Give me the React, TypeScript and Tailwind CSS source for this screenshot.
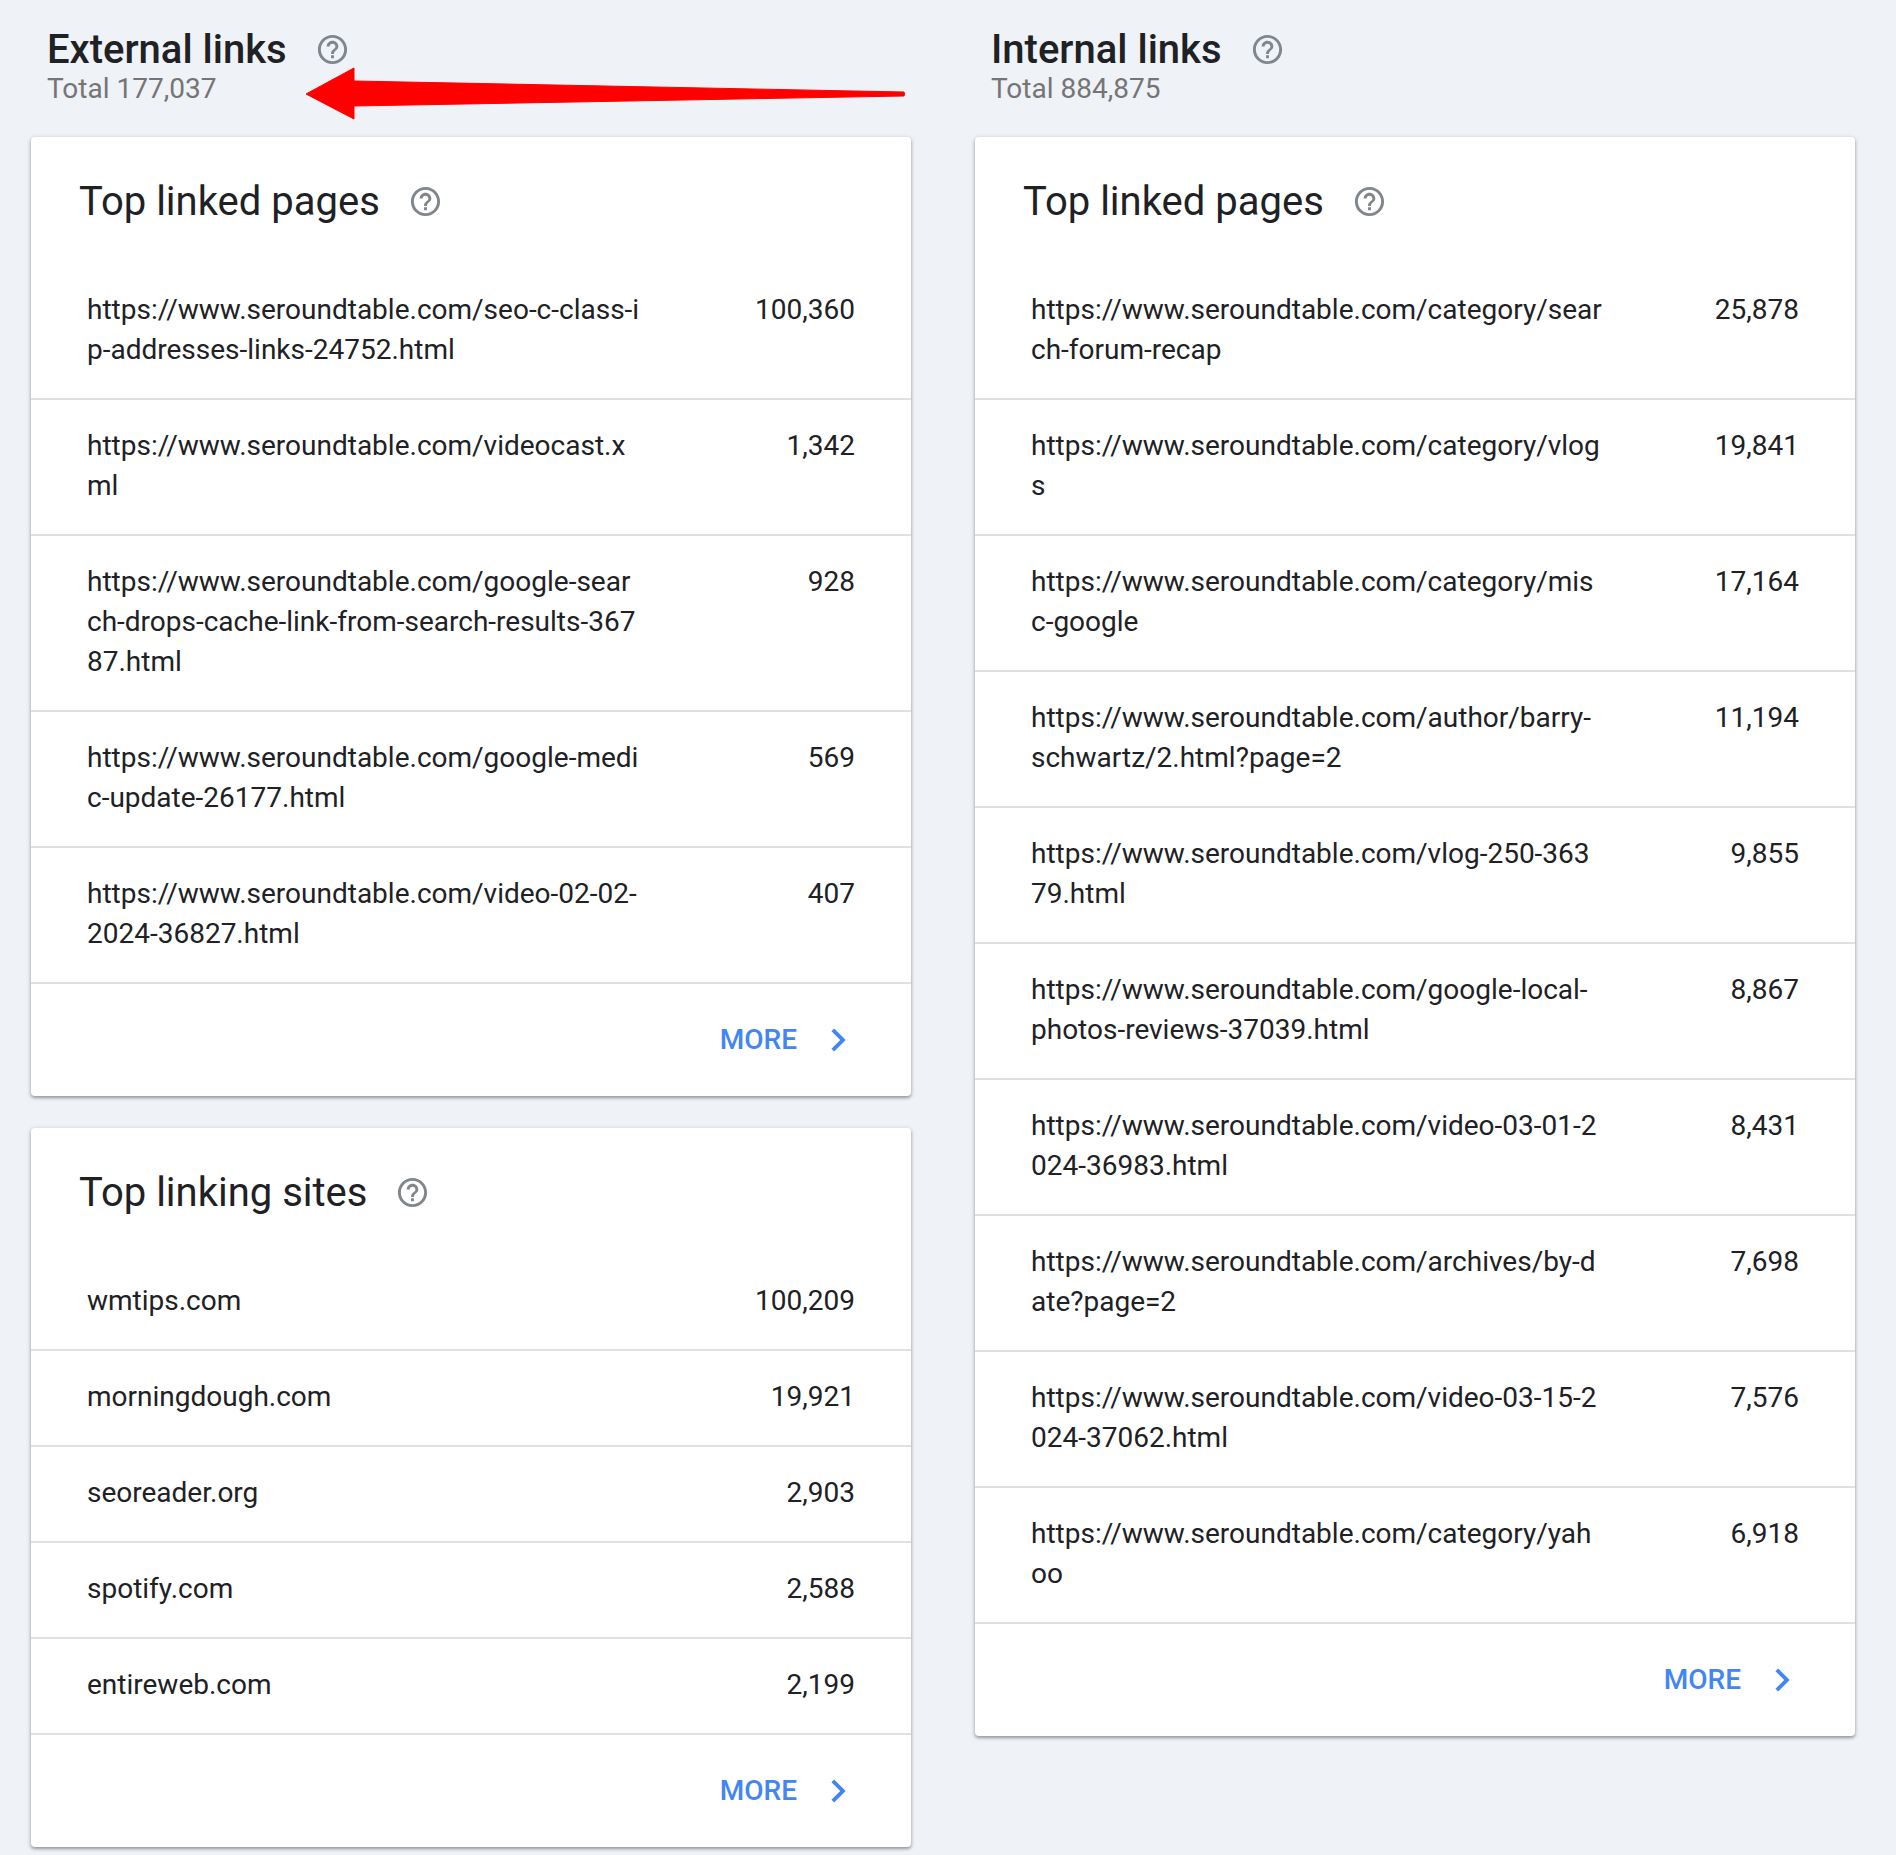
const font = { fontFamily: "Roboto, sans-serif" };

function Help() {
  return (
    <svg viewBox="0 0 24 24" className="w-[35px] h-[35px] ml-[28px] shrink-0 fill-[#80868b]">
      <path d="M11 18h2v-2h-2v2zm1-16C6.48 2 2 6.48 2 12s4.48 10 10 10 10-4.48 10-10S17.52 2 12 2zm0 18c-4.41 0-8-3.59-8-8s3.59-8 8-8 8 3.59 8 8-3.59 8-8 8zm0-14c-2.21 0-4 1.79-4 4h2c0-1.1.9-2 2-2s2 .9 2 2c0 2-3 1.75-3 5h2c0-2.25 3-2.5 3-5 0-2.21-1.79-4-4-4z" />
    </svg>
  );
}

function Card({ title, rows }: { title: string; rows: [string, string][] }) {
  return (
    <div className="bg-white rounded-[4px] shadow-[0_2px_3px_rgba(60,64,67,0.4),0_1px_4px_1px_rgba(60,64,67,0.15)]">
      <div className="h-[127px] pl-[48px] pt-[46px] flex items-start">
        <div className="flex items-center h-[36px]">
          <span className="text-[40px] leading-[37px] text-[#202124]">{title}</span>
          <Help />
        </div>
      </div>
      {rows.map(([url, n]) => (
        <div key={url} className="flex justify-between pl-[56px] pr-[56px] pt-[26px] pb-[28px] border-b-2 border-[#e0e0e0] text-[28px] leading-[40px] text-[#202124]">
          <div className="w-[590px] whitespace-pre-line">{url}</div>
          <div>{n}</div>
        </div>
      ))}
      <div className="h-[112px] flex items-center justify-end pr-[50px]">
        <span className="text-[28px] font-medium text-[#4285f4]">MORE</span>
        <svg viewBox="0 0 24 24" className="w-[46px] h-[46px] ml-[18px] fill-[#4285f4]">
          <path d="M10 6L8.59 7.41 13.17 12l-4.58 4.59L10 18l6-6z" />
        </svg>
      </div>
    </div>
  );
}

function Head({ title, total }: { title: string; total: string }) {
  return (
    <div className="h-[137px] pl-[16px] pt-[27px]">
      <div className="flex items-center h-[44px]">
        <span className="text-[40px] leading-[44px] pt-[2px] font-medium text-[#202124]">{title}</span>
        <Help />
      </div>
      <div className="mt-[1px] text-[28px] leading-[34px] text-[#757575]">{total}</div>
    </div>
  );
}

const topExt: [string, string][] = [
  ["https://www.seroundtable.com/seo-c-class-i\np-addresses-links-24752.html", "100,360"],
  ["https://www.seroundtable.com/videocast.x\nml", "1,342"],
  ["https://www.seroundtable.com/google-sear\nch-drops-cache-link-from-search-results-367\n87.html", "928"],
  ["https://www.seroundtable.com/google-medi\nc-update-26177.html", "569"],
  ["https://www.seroundtable.com/video-02-02-\n2024-36827.html", "407"],
];
const sites: [string, string][] = [
  ["wmtips.com", "100,209"],
  ["morningdough.com", "19,921"],
  ["seoreader.org", "2,903"],
  ["spotify.com", "2,588"],
  ["entireweb.com", "2,199"],
];
const topInt: [string, string][] = [
  ["https://www.seroundtable.com/category/sear\nch-forum-recap", "25,878"],
  ["https://www.seroundtable.com/category/vlog\ns", "19,841"],
  ["https://www.seroundtable.com/category/mis\nc-google", "17,164"],
  ["https://www.seroundtable.com/author/barry-\nschwartz/2.html?page=2", "11,194"],
  ["https://www.seroundtable.com/vlog-250-363\n79.html", "9,855"],
  ["https://www.seroundtable.com/google-local-\nphotos-reviews-37039.html", "8,867"],
  ["https://www.seroundtable.com/video-03-01-2\n024-36983.html", "8,431"],
  ["https://www.seroundtable.com/archives/by-d\nate?page=2", "7,698"],
  ["https://www.seroundtable.com/video-03-15-2\n024-37062.html", "7,576"],
  ["https://www.seroundtable.com/category/yah\noo", "6,918"],
];

export default function App() {
  return (
    <div style={font} className="relative h-[1855px] bg-[#eff2f7] pl-[31px] overflow-hidden">
      <div className="grid grid-cols-[880px_880px] gap-x-[64px] items-start">
        <div>
          <Head title="External links" total="Total 177,037" />
          <Card title="Top linked pages" rows={topExt} />
          <div className="h-[32px]" />
          <Card title="Top linking sites" rows={sites} />
        </div>
        <div>
          <Head title="Internal links" total="Total 884,875" />
          <Card title="Top linked pages" rows={topInt} />
        </div>
      </div>
      <svg className="absolute left-0 top-0 w-[1000px] h-[140px]" viewBox="0 0 1000 140">
        <path d="M306 94 L354 68 L354 81 L904 92 Q905 94 904 96 L354 106 L354 119 Z" fill="#ff0000" stroke="#ff0000" strokeWidth="1" strokeLinejoin="round" />
      </svg>
    </div>
  );
}
